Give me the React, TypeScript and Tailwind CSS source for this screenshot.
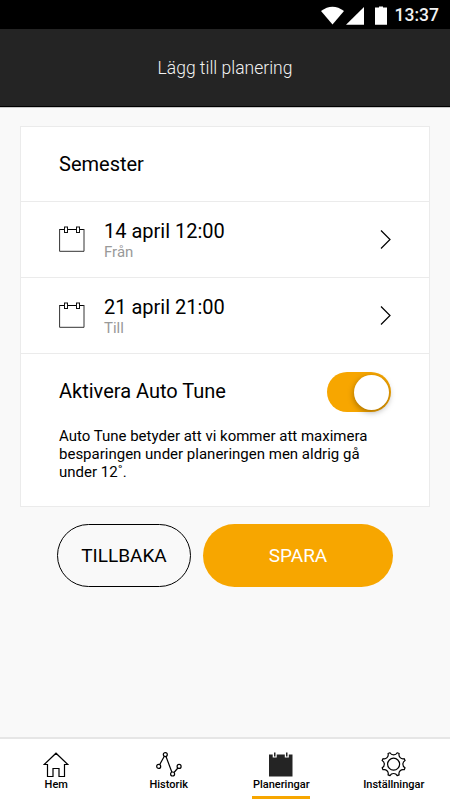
import React from "react";

const CalendarIcon = () => (
  <svg width="27" height="27" viewBox="0 0 27 27" fill="none" stroke="#111" strokeWidth="1">
    <path d="M5 3.5H0.5M9 3.5H17M25 3.5H21" stroke="#000" />
    <path d="M0.6 3V25.3H25V3" stroke="#333" />
    <rect x="5.5" y="1" width="3" height="5.5" />
    <rect x="17.5" y="1" width="3" height="5.5" />
  </svg>
);

const HomeIcon = () => (
  <svg width="26" height="26" viewBox="0 0 26 26" fill="none" stroke="#000" strokeWidth="1.2">
    <path d="M4.5 12.5H1.2L13 1.2L24.8 12.5H21.5V24.5H16V16.5H10V24.5H4.5Z" />
  </svg>
);

const HistoryIcon = () => (
  <svg width="26" height="26" viewBox="0 0 26 26" fill="none" stroke="#000" strokeWidth="1.2">
    <path d="M3.7 12.6L8.3 4.2M10 4.5L15.9 20.3M18 20.5L21.9 16" />
    <circle cx="2.7" cy="14.4" r="2" />
    <circle cx="9.3" cy="2.6" r="2" />
    <circle cx="16.6" cy="22" r="2" />
    <circle cx="23.1" cy="14.4" r="2" />
  </svg>
);

const PlanIcon = () => (
  <svg width="26" height="26" viewBox="0 0 26 26">
    <path fill="#242424" d="M1 2.5H4.7V5.5H8.7V2.5H16.8V5.5H20.8V2.5H24.5V24.5H1Z" />
    <path fill="#242424" d="M6 0.5H7.5V4.5H6ZM18 0.5H19.5V4.5H18Z" />
  </svg>
);

const GearIcon = () => (
  <svg width="26" height="26" viewBox="-12.6 -12.2 26 26" fill="none" stroke="#000" strokeWidth="1.2" strokeLinejoin="round">
    <path d="M11.44 3.61L10.64 5.54A4.1 4.1 0 0 0 5.54 10.64L3.61 11.44A4.1 4.1 0 0 0 -3.61 11.44L-5.54 10.64A4.1 4.1 0 0 0 -10.64 5.54L-11.44 3.61A4.1 4.1 0 0 0 -11.44 -3.61L-10.64 -5.54A4.1 4.1 0 0 0 -5.54 -10.64L-3.61 -11.44A4.1 4.1 0 0 0 3.61 -11.44L5.54 -10.64A4.1 4.1 0 0 0 10.64 -5.54L11.44 -3.61A4.1 4.1 0 0 0 11.44 3.61Z" />
    <circle r="6" />
  </svg>
);

const StatusBar = () => (
  <div className="h-[29px] bg-black flex items-center justify-end pr-[11px] pt-[2px] text-white">
    <svg width="68" height="20" viewBox="0 0 68 20" fill="#fff" className="mr-[6px]">
      <path d="M0 5Q11.5 -3.5 23 5L11.5 18.5Z" />
      <path d="M25 18.8L43 1V18.8Z" />
      <path d="M54 1.5H58V0.5H62V1.5H66V18.8H54Z" />
    </svg>
    <span className="text-[17.5px] leading-[27px] font-medium text-[#f2f2f2]">13:37</span>
  </div>
);

const DateRow = (props: any) => {
  const { date, label } = props;
  return (
    <div className="h-[76px] flex items-center border-b border-[#ebebeb] pl-[38px] pr-[38px]">
      <CalendarIcon />
      <div className="flex-1 ml-[18px]">
        <p className="text-[20px] leading-[24px]">{date}</p>
        <p className="text-[15px] leading-[18px] text-[#999]">{label}</p>
      </div>
      <svg width="11" height="20" viewBox="0 0 11 20" fill="none" stroke="#000" strokeWidth="1.2">
        <path d="M1 0.5L10 9.5L1 18.5" />
      </svg>
    </div>
  );
};

const NavItem = (props: any) => {
  const { icon, label, active } = props;
  return (
    <div className="flex-1 flex flex-col items-center pt-[12.5px]">
      {icon}
      <span className="text-[11px] leading-[14px] font-medium mt-[0.5px]">{label}</span>
      {active && <div className="w-[58px] h-[3px] mt-[4px] bg-[#f7a600]" />}
    </div>
  );
};

const App = () => {
  return (
    <div className="w-[450px] h-[800px] bg-[#f9f9f9] flex flex-col text-black font-['Roboto',sans-serif] overflow-hidden">
      <StatusBar />
      <header className="h-[78px] bg-[#242424] border-b border-black flex items-center justify-center">
        <h1 className="text-[17.5px] pt-[2px] font-light text-[#f2f2f2]">Lägg till planering</h1>
      </header>
      <main className="flex-1 border-t border-[#c8c8c8] pt-[18px]">
        <div className="ml-[20px] w-[410px] h-[381px] bg-white border border-[#ebebeb]">
          <div className="h-[75px] border-b border-[#ebebeb] pl-[38px] flex items-center">
            <p className="text-[20px]">Semester</p>
          </div>
          <DateRow date="14 april 12:00" label="Från" />
          <DateRow date="21 april 21:00" label="Till" />
          <div className="pl-[38px] pr-[38px] pt-[18px]">
            <div className="flex items-center justify-between">
              <p className="text-[20px] pb-[2px]">Aktivera Auto Tune</p>
              <div className="w-[64px] h-[40px] rounded-full bg-[#f7a600] flex items-center justify-end pr-[2px]">
                <div className="w-[35px] h-[35px] rounded-full bg-white shadow-[0_2px_6px_rgba(0,0,0,0.35)]" />
              </div>
            </div>
            <p className="mt-[16px] text-[15px] leading-[17.8px] whitespace-nowrap">
              Auto Tune betyder att vi kommer att maximera
              <br />
              besparingen under planeringen men aldrig gå
              <br />
              under 12˚.
            </p>
          </div>
        </div>
        <div className="flex mt-[17px] pl-[57px] gap-[12px]">
          <button className="w-[134px] h-[63px] pt-[2px] rounded-full border border-black text-[19px]">TILLBAKA</button>
          <button className="w-[190px] h-[63px] pt-[2px] rounded-full bg-[#f7a600] text-white text-[19px]">SPARA</button>
        </div>
      </main>
      <nav className="h-[63px] bg-white border-t-2 border-[#e6e6e6] flex">
        <NavItem icon={<HomeIcon />} label="Hem" />
        <NavItem icon={<HistoryIcon />} label="Historik" />
        <NavItem icon={<PlanIcon />} label="Planeringar" active />
        <NavItem icon={<GearIcon />} label="Inställningar" />
      </nav>
    </div>
  );
};

export default App;
